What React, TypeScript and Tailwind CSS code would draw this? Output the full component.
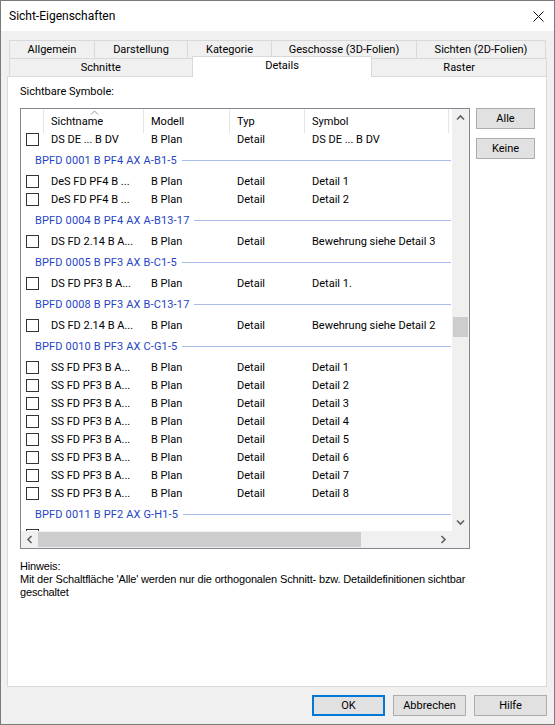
import React from "react";

type Row =
  | { kind: "item"; name: string; symbol: string }
  | { kind: "group"; title: string };

const rows: Row[] = [
  { kind: "item", name: "DS DE ... B DV", symbol: "DS DE ... B DV" },
  { kind: "group", title: "BPFD 0001 B PF4 AX A-B1-5" },
  { kind: "item", name: "DeS FD PF4 B ...", symbol: "Detail 1" },
  { kind: "item", name: "DeS FD PF4 B ...", symbol: "Detail 2" },
  { kind: "group", title: "BPFD 0004 B PF4 AX A-B13-17" },
  { kind: "item", name: "DS FD 2.14 B A...", symbol: "Bewehrung siehe Detail 3" },
  { kind: "group", title: "BPFD 0005 B PF3 AX B-C1-5" },
  { kind: "item", name: "DS FD PF3 B A...", symbol: "Detail 1." },
  { kind: "group", title: "BPFD 0008 B PF3 AX B-C13-17" },
  { kind: "item", name: "DS FD 2.14 B A...", symbol: "Bewehrung siehe Detail 2" },
  { kind: "group", title: "BPFD 0010 B PF3 AX C-G1-5" },
  { kind: "item", name: "SS FD PF3 B A...", symbol: "Detail 1" },
  { kind: "item", name: "SS FD PF3 B A...", symbol: "Detail 2" },
  { kind: "item", name: "SS FD PF3 B A...", symbol: "Detail 3" },
  { kind: "item", name: "SS FD PF3 B A...", symbol: "Detail 4" },
  { kind: "item", name: "SS FD PF3 B A...", symbol: "Detail 5" },
  { kind: "item", name: "SS FD PF3 B A...", symbol: "Detail 6" },
  { kind: "item", name: "SS FD PF3 B A...", symbol: "Detail 7" },
  { kind: "item", name: "SS FD PF3 B A...", symbol: "Detail 8" },
  { kind: "group", title: "BPFD 0011 B PF2 AX G-H1-5" },
  { kind: "item", name: "", symbol: "" },
];

function Chevron({ dir }: { dir: "up" | "down" | "left" | "right" }) {
  const rot = { up: 0, down: 180, left: 270, right: 90 }[dir];
  return (
    <svg width="9" height="9" viewBox="0 0 9 9" style={{ transform: `rotate(${rot}deg)` }}>
      <path d="M1 6.5 L4.5 3 L8 6.5" fill="none" stroke="#606060" strokeWidth="1.6" />
    </svg>
  );
}

function Checkbox() {
  return <div className="w-[13px] h-[13px] border border-[#333333] bg-white shrink-0" />;
}

function ItemRow({ name, symbol }: { name: string; symbol: string }) {
  return (
    <div className="h-[18px] flex items-center whitespace-nowrap">
      <div className="w-[23px] pl-[5px] shrink-0">
        <Checkbox />
      </div>
      <div className="w-[100px] pl-[7px] shrink-0">{name}</div>
      <div className="w-[86px] pl-[7px] shrink-0">{name ? "B Plan" : ""}</div>
      <div className="w-[75px] pl-[7px] shrink-0">{name ? "Detail" : ""}</div>
      <div className="pl-[7px]">{symbol}</div>
    </div>
  );
}

function GroupRow({ title }: { title: string }) {
  return (
    <div className="h-[24px] flex items-center pl-[14px] pr-px whitespace-nowrap">
      <span className="text-[#1f45c4] tracking-[0.15px]">{title}</span>
      <div className="flex-1 h-px bg-[#a9bce8] ml-[5px]" />
    </div>
  );
}

function Tab({ label, w, first }: { label: string; w: string; first?: boolean }) {
  return (
    <div
      className={`${w} ${first ? "" : "-ml-px"} h-full border border-b-0 border-[#d9d9d9] flex items-center justify-center`}
    >
      {label}
    </div>
  );
}

export default function App() {
  return (
    <div className="w-[555px] h-[725px] bg-[#f0f0f0] border border-[#7a7a7a] flex flex-col font-[Roboto,sans-serif] text-[11px] text-black leading-[13px]">
      {/* title bar */}
      <div className="h-[30px] bg-white flex items-center justify-between pl-[8px] pr-[10px] text-[12px]">
        <span>Sicht-Eigenschaften</span>
        <svg width="11" height="11" viewBox="0 0 11 11">
          <path d="M0.5 0.5 L10.5 10.5 M10.5 0.5 L0.5 10.5" stroke="#111" strokeWidth="1" />
        </svg>
      </div>

      <div className="flex-1 flex flex-col pl-[6px] pr-[7px] pt-[9px] pb-[8px]">
        {/* tabs */}
        <div className="pl-[2px]">
          <div className="flex h-[18px]">
            <Tab label="Allgemein" w="w-[86px]" first />
            <Tab label="Darstellung" w="w-[94px]" />
            <Tab label="Kategorie" w="w-[85px]" />
            <Tab label="Geschosse (3D-Folien)" w="w-[146px]" />
            <Tab label="Sichten (2D-Folien)" w="w-[130px]" />
          </div>
          <div className="flex h-[18px] items-end">
            <Tab label="Schnitte" w="w-[184px]" first />
            <div className="-ml-px w-[181px] h-[21px] -mb-px relative z-10 bg-white border border-b-0 border-[#d9d9d9] flex items-start justify-center pt-[2px]">
              Details
            </div>
            <Tab label="Raster" w="w-[176px]" />
          </div>
        </div>

        {/* page */}
        <div className="flex-1 bg-white border border-[#d9d9d9] pl-[12px] pt-[8px]">
          <div>Sichtbare Symbole:</div>
          <div className="flex mt-[10px]">
            <div className="w-[450px] h-[441px] border border-[#828790] flex flex-col">
              <div className="flex h-[422px]">
                <div className="w-[431px] flex flex-col overflow-hidden">
                  <div className="h-[24px] shrink-0 flex relative z-10 bg-white whitespace-nowrap">
                    <div className="w-[23px] border-r border-[#e5e5e5]" />
                    <div className="w-[100px] border-r border-[#e5e5e5] pl-[7px] flex items-center relative">
                      Sichtname
                      <svg className="absolute left-[46px] top-[1px]" width="9" height="5" viewBox="0 0 9 5">
                        <path d="M1 4.5 L4.5 1 L8 4.5" fill="none" stroke="#999" strokeWidth="1" />
                      </svg>
                    </div>
                    <div className="w-[86px] border-r border-[#e5e5e5] pl-[7px] flex items-center">Modell</div>
                    <div className="w-[75px] border-r border-[#e5e5e5] pl-[7px] flex items-center">Typ</div>
                    <div className="w-[144px] border-r border-[#e5e5e5] pl-[7px] flex items-center">Symbol</div>
                  </div>
                  <div className="-mt-[3px]">
                    {rows.map((r, i) =>
                      r.kind === "group" ? (
                        <GroupRow key={i} title={r.title} />
                      ) : (
                        <ItemRow key={i} name={r.name} symbol={r.symbol} />
                      )
                    )}
                  </div>
                </div>
                {/* vertical scrollbar */}
                <div className="w-[17px] bg-[#f0f0f0] flex flex-col">
                  <div className="h-[17px] flex items-center justify-center">
                    <Chevron dir="up" />
                  </div>
                  <div className="flex-1 pt-[191px] px-px">
                    <div className="h-[20px] bg-[#cdcdcd]" />
                  </div>
                  <div className="h-[17px] flex items-center justify-center">
                    <Chevron dir="down" />
                  </div>
                </div>
              </div>
              {/* horizontal scrollbar */}
              <div className="flex-1 flex bg-[#f0f0f0]">
                <div className="w-[17px] flex items-center justify-center">
                  <Chevron dir="left" />
                </div>
                <div className="w-[397px] py-px">
                  <div className="w-[323px] h-full bg-[#cdcdcd]" />
                </div>
                <div className="w-[17px] flex items-center justify-center">
                  <Chevron dir="right" />
                </div>
              </div>
            </div>
            <div className="ml-[6px] flex flex-col gap-[9px]">
              <button className="w-[59px] h-[21px] bg-[#e1e1e1] border border-[#adadad]">Alle</button>
              <button className="w-[59px] h-[21px] bg-[#e1e1e1] border border-[#adadad]">Keine</button>
            </div>
          </div>
          <div className="mt-[11px] whitespace-nowrap font-['Liberation_Sans',sans-serif] tracking-[-0.15px]">
            <div>Hinweis:</div>
            <div>
              Mit der Schaltfläche 'Alle' werden nur die orthogonalen Schnitt- bzw. Detaildefinitionen sichtbar
            </div>
            <div>geschaltet</div>
          </div>
        </div>

        {/* dialog buttons */}
        <div className="flex justify-end gap-[8px] mt-[8px]">
          <button className="w-[73px] h-[21px] bg-[#e1e1e1] border-2 border-[#0078d7]">OK</button>
          <button className="w-[73px] h-[21px] bg-[#e1e1e1] border border-[#adadad]">Abbrechen</button>
          <button className="w-[73px] h-[21px] bg-[#e1e1e1] border border-[#adadad]">Hilfe</button>
        </div>
      </div>
    </div>
  );
}
